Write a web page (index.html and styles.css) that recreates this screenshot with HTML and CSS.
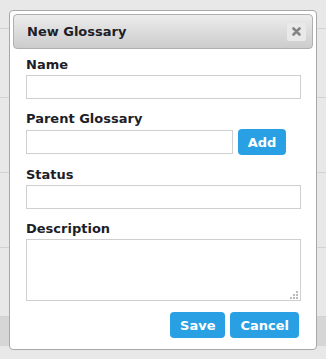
FILE: index.html
```html
<!DOCTYPE html>
<html lang="en">
<head>
<meta charset="UTF-8">
<meta name="viewport" content="width=device-width, initial-scale=1.0">
<title>New Glossary</title>
<link rel="stylesheet" href="styles.css">
</head>
<body>
<div class="page">
  <div class="row row-top"></div>
  <div class="row row-second"></div>
  <div class="row"></div>
  <div class="row"></div>
  <div class="row row-last"></div>
  <div class="footer-band"></div>
</div>

<div class="dialog">
  <div class="titlebar">
    <span class="title">New Glossary</span>
    <button class="close-btn" type="button">
      <svg width="9" height="9" viewBox="0 0 9 9"><path d="M1.5 1.5 L7.5 7.5 M7.5 1.5 L1.5 7.5" stroke="#858585" stroke-width="2.6" stroke-linecap="round"/></svg>
    </button>
  </div>

  <form class="dialog-body">
    <label class="field-label" for="name">Name</label>
    <input type="text" id="name" class="field">

    <label class="field-label" for="parent">Parent Glossary</label>
    <div class="inline-row">
      <input type="text" id="parent" class="field field-short">
      <button type="button" class="btn btn-add">Add</button>
    </div>

    <label class="field-label" for="status">Status</label>
    <input type="text" id="status" class="field">

    <label class="field-label" for="description">Description</label>
    <div class="textarea-wrap">
      <textarea id="description" class="field field-area"></textarea>
      <svg class="grip" width="9" height="9" viewBox="0 0 9 9">
        <rect x="7" y="1" width="2" height="2" fill="#bbb"/>
        <rect x="4" y="4" width="2" height="2" fill="#bbb"/>
        <rect x="7" y="4" width="2" height="2" fill="#bbb"/>
        <rect x="1" y="7" width="2" height="2" fill="#bbb"/>
        <rect x="4" y="7" width="2" height="2" fill="#bbb"/>
        <rect x="7" y="7" width="2" height="2" fill="#bbb"/>
      </svg>
    </div>

    <div class="actions">
      <button type="submit" class="btn">Save</button>
      <button type="button" class="btn">Cancel</button>
    </div>
  </form>
</div>
</body>
</html>
```

FILE: styles.css
```css
body {
  margin: 0;
  padding: 0;
  background-color: #e8e8e8;
  font-family: "DejaVu Sans", Verdana, sans-serif;
  color: #222;
}

.page {
  height: 359px;
}

.row {
  height: 74px;
  border-bottom: 1px solid #d2d2d2;
}

.row-top {
  height: 28px;
}

.row-second {
  height: 68px;
}

.row-last {
  height: 68px;
}

.footer-band {
  height: 29px;
  background-color: #d6d6d6;
}

.dialog {
  position: absolute;
  left: 9px;
  top: 10px;
  width: 300px;
  height: 332px;
  background-color: #fff;
  border: 1px solid #a8a8a8;
  border-radius: 4px;
  padding: 3px;
}

.titlebar {
  display: flex;
  align-items: center;
  justify-content: space-between;
  height: 33px;
  border: 1px solid #b0b0b0;
  border-radius: 4px;
  background: linear-gradient(to bottom, #ececec, #cccccc);
  padding: 0 6px 0 13px;
}

.title {
  font-size: 13px;
  font-weight: bold;
  color: #1e1e28;
}

.close-btn {
  width: 19px;
  height: 18px;
  padding: 0;
  border: none;
  border-radius: 2px;
  background-color: #e9e9e9;
  display: flex;
  align-items: center;
  justify-content: center;
}

.dialog-body {
  margin: 0;
  padding: 0 12px 0 13px;
}

.field-label {
  display: block;
  font-size: 13px;
  font-weight: bold;
  line-height: 16px;
  margin-top: 12px;
  margin-bottom: 2px;
  color: #1e1e28;
}

.field-label:first-child {
  margin-top: 8px;
}

.field {
  display: block;
  width: 100%;
  height: 24px;
  box-sizing: border-box;
  border: 1px solid #cfcfcf;
  margin: 0;
  padding: 2px 4px;
  font-family: inherit;
  font-size: 13px;
}

.inline-row {
  display: flex;
  align-items: center;
  gap: 5px;
}

.field-short {
  width: 207px;
}

.textarea-wrap {
  position: relative;
}

.field-area {
  height: 62px;
  resize: none;
}

.grip {
  position: absolute;
  right: 3px;
  bottom: 2px;
}

.btn {
  background-color: #29a0e3;
  color: #fff;
  border: none;
  border-radius: 4px;
  font-family: inherit;
  font-size: 13px;
  font-weight: bold;
  height: 26px;
  padding: 0 10px;
  cursor: pointer;
}

.btn-add {
  width: 48px;
  height: 26px;
  padding: 0;
}

.actions {
  display: flex;
  justify-content: flex-end;
  gap: 5px;
  margin-top: 11px;
  padding-right: 2px;
}
```
